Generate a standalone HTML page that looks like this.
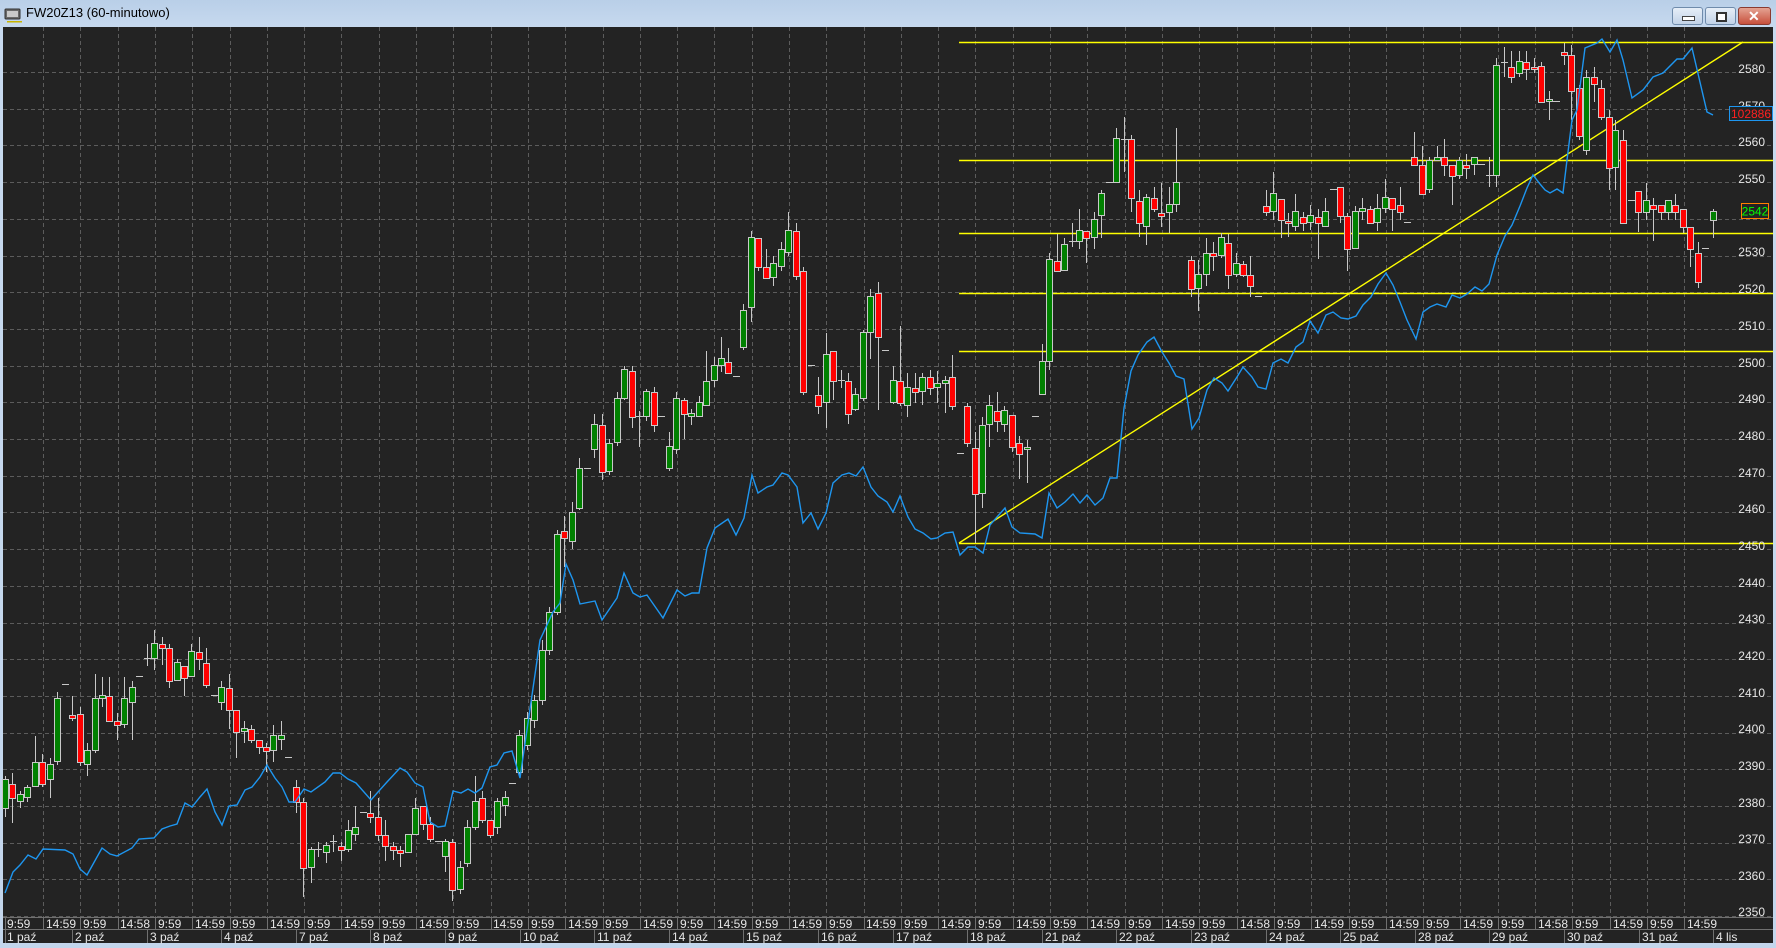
<!DOCTYPE html>
<html><head><meta charset="utf-8">
<style>
html,body{margin:0;padding:0;width:1776px;height:948px;overflow:hidden;background:#c3d6ec;}
#wrap{position:relative;width:1776px;height:948px;background:linear-gradient(#b9cfe8,#c8daef 30px,#c3d6ec);}
svg{position:absolute;left:0;top:0;}
.t{font-family:"Liberation Sans",sans-serif;font-size:12px;fill:#e6e6e6;}
.p{font-family:"Liberation Sans",sans-serif;font-size:12px;fill:#e6e6e6;text-anchor:end;}
.title{position:absolute;left:26px;top:5px;font-family:"Liberation Sans",sans-serif;font-size:13px;color:#000;}
.btn{position:absolute;top:7px;height:16px;border:1px solid #6f8bab;border-radius:3px;background:linear-gradient(#e6eef8,#c2d3e8);}
</style></head>
<body><div id="wrap">
<div class="title">FW20Z13 (60-minutowo)</div>
<div class="btn" style="left:1672px;width:29px;"><div style="position:absolute;left:9px;top:8px;width:11px;height:3px;background:#fff;border:1px solid #444;"></div></div>
<div class="btn" style="left:1705px;width:29px;"><div style="position:absolute;left:10px;top:4px;width:7px;height:6px;border:2px solid #333;background:#fff;"></div></div>
<div class="btn" style="left:1738px;width:31px;background:linear-gradient(#e4a393,#c8503c);border-color:#8a3a30;"><div style="position:absolute;left:9px;top:0px;color:#fff;font:bold 14px 'Liberation Sans',sans-serif;">✕</div></div>
<svg width="1776" height="948" viewBox="0 0 1776 948" xmlns="http://www.w3.org/2000/svg">
<g transform="translate(5,9)">
<rect x="0" y="0" width="15" height="10" rx="1" fill="#6a6a6a" stroke="#333"/>
<rect x="2" y="2" width="11" height="6" fill="#c9c9c9"/>
<rect x="2" y="12" width="15" height="1.5" fill="#c8b400"/>
</g>
<rect x="3" y="27" width="1770" height="916" fill="#232323"/>
<g id="grid" stroke="#5c5c5c" stroke-width="1" stroke-dasharray="4,3" shape-rendering="crispEdges"></g>
<g id="ylw" stroke="#ffff00" stroke-width="1.4" fill="none">
<line x1="959" y1="42.5" x2="1773" y2="42.5"/>
<line x1="959" y1="160.5" x2="1773" y2="160.5"/>
<line x1="959" y1="233.5" x2="1773" y2="233.5"/>
<line x1="959" y1="293.5" x2="1773" y2="293.5"/>
<line x1="959" y1="351.5" x2="1773" y2="351.5"/>
<line x1="959" y1="543.5" x2="1773" y2="543.5"/>
<line x1="959" y1="543" x2="1743" y2="42"/>
</g>
<g id="cand" shape-rendering="crispEdges"></g>
<polyline id="blue" fill="none" stroke="#1e96f0" stroke-width="1.4" points=""/>
<g id="axis" stroke="#707070" shape-rendering="crispEdges">
<line x1="3" y1="917.5" x2="1773" y2="917.5"/>
<line x1="3" y1="929.5" x2="1773" y2="929.5"/>
</g>
<g>
<text class="p" x="1765" y="73">2580</text><text class="p" x="1765" y="110">2570</text><text class="p" x="1765" y="146">2560</text><text class="p" x="1765" y="183">2550</text>
<text class="p" x="1765" y="256">2530</text><text class="p" x="1765" y="293">2520</text><text class="p" x="1765" y="330">2510</text>
<text class="p" x="1765" y="367">2500</text><text class="p" x="1765" y="403">2490</text><text class="p" x="1765" y="440">2480</text><text class="p" x="1765" y="477">2470</text>
<text class="p" x="1765" y="513">2460</text><text class="p" x="1765" y="550">2450</text><text class="p" x="1765" y="587">2440</text><text class="p" x="1765" y="623">2430</text>
<text class="p" x="1765" y="660">2420</text><text class="p" x="1765" y="697">2410</text><text class="p" x="1765" y="733">2400</text><text class="p" x="1765" y="770">2390</text>
<text class="p" x="1765" y="807">2380</text><text class="p" x="1765" y="843">2370</text><text class="p" x="1765" y="880">2360</text><text class="p" x="1765" y="916">2350</text>
</g>
<rect x="1741.5" y="203.5" width="27" height="15" fill="#232323" stroke="#ff8000"/>
<text x="1755" y="215.5" text-anchor="middle" style="font-family:'Liberation Sans',sans-serif;font-size:12px;fill:#00ff00">2542</text>
<rect x="1729.5" y="106.5" width="43" height="14" fill="#232323" stroke="#1e96f0"/>
<text x="1751" y="118" text-anchor="middle" style="font-family:'Liberation Sans',sans-serif;font-size:12px;fill:#ff2020">102886</text>
<g>
<text class="t" x="7" y="928">9:59</text>
<text class="t" x="46" y="928">14:59</text><text class="t" x="83" y="928">9:59</text><text class="t" x="120" y="928">14:58</text><text class="t" x="158" y="928">9:59</text>
<text class="t" x="195" y="928">14:59</text><text class="t" x="232" y="928">9:59</text><text class="t" x="270" y="928">14:59</text><text class="t" x="307" y="928">9:59</text>
<text class="t" x="344" y="928">14:59</text><text class="t" x="382" y="928">9:59</text><text class="t" x="419" y="928">14:59</text><text class="t" x="456" y="928">9:59</text>
<text class="t" x="493" y="928">14:59</text><text class="t" x="531" y="928">9:59</text><text class="t" x="568" y="928">14:59</text><text class="t" x="605" y="928">9:59</text>
<text class="t" x="643" y="928">14:59</text><text class="t" x="680" y="928">9:59</text><text class="t" x="717" y="928">14:59</text><text class="t" x="755" y="928">9:59</text>
<text class="t" x="792" y="928">14:59</text><text class="t" x="829" y="928">9:59</text><text class="t" x="866" y="928">14:59</text><text class="t" x="904" y="928">9:59</text>
<text class="t" x="941" y="928">14:59</text><text class="t" x="978" y="928">9:59</text><text class="t" x="1016" y="928">14:59</text><text class="t" x="1053" y="928">9:59</text>
<text class="t" x="1090" y="928">14:59</text><text class="t" x="1128" y="928">9:59</text><text class="t" x="1165" y="928">14:59</text><text class="t" x="1202" y="928">9:59</text>
<text class="t" x="1240" y="928">14:58</text><text class="t" x="1277" y="928">9:59</text><text class="t" x="1314" y="928">14:59</text><text class="t" x="1351" y="928">9:59</text>
<text class="t" x="1389" y="928">14:59</text><text class="t" x="1426" y="928">9:59</text><text class="t" x="1463" y="928">14:59</text><text class="t" x="1501" y="928">9:59</text>
<text class="t" x="1538" y="928">14:58</text><text class="t" x="1575" y="928">9:59</text><text class="t" x="1613" y="928">14:59</text><text class="t" x="1650" y="928">9:59</text>
<text class="t" x="1687" y="928">14:59</text>
</g>
<g>
<text class="t" x="7" y="941">1 paź</text><text class="t" x="75" y="941">2 paź</text><text class="t" x="150" y="941">3 paź</text><text class="t" x="224" y="941">4 paź</text>
<text class="t" x="299" y="941">7 paź</text><text class="t" x="373" y="941">8 paź</text><text class="t" x="448" y="941">9 paź</text><text class="t" x="523" y="941">10 paź</text>
<text class="t" x="597" y="941">11 paź</text><text class="t" x="672" y="941">14 paź</text><text class="t" x="746" y="941">15 paź</text><text class="t" x="821" y="941">16 paź</text>
<text class="t" x="896" y="941">17 paź</text><text class="t" x="970" y="941">18 paź</text><text class="t" x="1045" y="941">21 paź</text><text class="t" x="1119" y="941">22 paź</text>
<text class="t" x="1194" y="941">23 paź</text><text class="t" x="1269" y="941">24 paź</text><text class="t" x="1343" y="941">25 paź</text><text class="t" x="1418" y="941">28 paź</text>
<text class="t" x="1492" y="941">29 paź</text><text class="t" x="1567" y="941">30 paź</text><text class="t" x="1642" y="941">31 paź</text><text class="t" x="1716" y="941">4 lis</text>
</g>
</svg>
<script>
(function(){
var NS="http://www.w3.org/2000/svg";
function el(p,n,a){var e=document.createElementNS(NS,n);for(var k in a)e.setAttribute(k,a[k]);p.appendChild(e);return e;}
var g=document.getElementById('grid');
for(var p=2350;p<=2580;p+=10){var y=Math.round(72+(2580-p)*3.67)+0.5;el(g,'line',{x1:3,y1:y,x2:1773,y2:y});}
for(var k=0;k<=44;k++){var x=Math.round(43+37.3*k)+0.5;el(g,'line',{x1:x,y1:27,x2:x,y2:917});}
var ax=document.getElementById('axis');
for(var k=0;k<=44;k++){var x=Math.round(43+37.3*k)+0.5;el(ax,'line',{x1:x,y1:917,x2:x,y2:929});}
el(ax,'line',{x1:5.5,y1:917,x2:5.5,y2:943});
for(var i=1;i<=23;i++){var x=Math.round(72+74.6*(i-1))+0.5;el(ax,'line',{x1:x,y1:929,x2:x,y2:943});}
var C=[
[5.3,'g',779,808,776,817],[12.3,'r',784,798,773,823],[19.7,'g',794,801,791,808],[27.3,'g',787,797,785,802],[34.7,'g',762,786,736,787],[42.3,'r',762,784,754,787],[49.7,'g',764,779,758,798],[57.3,'g',698,761,692,765],[64.7,'d',684,684,684,684],[72.3,'r',715,718,696,721],[80,'r',714,762,707,766],[87.3,'g',750,764,743,776],[94.7,'g',698,750,674,753],[102,'g',695,698,677,707],[109.3,'r',696,721,677,721],[116.7,'r',721,725,713,740],[124.3,'g',698,724,677,728],[132,'g',687,702,681,740],[139.3,'d',676,676,676,676],[147,'d',658,658,644,666],[154.3,'g',643,658,630,670],[162,'r',644,648,637,665],[169.3,'r',648,681,644,688],[176.7,'g',662,680,659,681],[184,'r',666,678,666,696],[191.3,'g',651,676,644,676],[199,'r',652,659,637,670],[206.3,'r',663,685,648,688],[213.7,'d',695,695,695,695],[221,'g',687,702,681,710],[228.7,'r',688,710,674,729],[236,'r',710,732,710,758],[243.7,'g',728,731,721,743],[251,'r',729,740,725,743],[258.7,'r',740,747,740,754],[266,'r',747,751,743,772],[273.3,'g',735,750,725,762],[281,'g',735,739,721,750],[288.3,'d',757,757,757,757],[295.7,'r',787,802,780,813],[303,'r',802,868,798,897],[310.7,'g',849,867,847,883],[318,'d',849,849,842,857],[325.7,'g',845,852,842,863],[333,'d',841,841,835,852],[340.7,'r',846,850,842,861],[348,'g',830,849,820,852],[355.3,'g',827,834,806,841],[362.7,'d',812,812,812,812],[370.3,'r',813,817,791,823],[377.7,'r',817,835,798,841],[385.3,'r',835,846,820,861],[392.7,'r',846,850,842,860],[400.3,'r',850,853,846,867],[407.7,'g',834,852,834,852],[415.3,'g',808,834,798,835],[422.7,'r',806,824,806,830],[430.3,'r',824,839,817,842],[437.7,'d',841,841,841,841],[445,'g',841,856,839,872],[452.3,'r',842,890,839,901],[460,'g',867,889,861,894],[467.3,'g',827,863,820,867],[474.7,'g',801,827,776,830],[482.3,'r',798,820,791,823],[489.7,'r',820,835,820,838],[497,'g',801,827,798,834],[504.7,'g',797,805,791,816],[512,'d',783,783,783,783],[519.3,'g',735,772,730,775],
[526.7,'g',718,745,712,750],[534,'g',700,720,695,728],[541.7,'g',650,700,640,705],[549.3,'g',612,650,607,655],[556.7,'g',534,612,530,615],
[564.3,'r',531,538,516,567],[571.7,'g',512,541,502,549],[579.3,'g',468,508,458,510],[586.7,'d',468,468,468,468],[594.3,'g',424,449,414,458],[601.7,'r',425,472,414,480],[609.3,'g',443,471,439,475],[616.7,'g',398,442,392,446],[624,'g',369,398,366,400],[631.7,'r',371,417,366,428],[639,'d',416,416,411,447],[646.3,'g',391,416,389,421],[653.7,'r',392,425,387,432],[661.3,'d',416,416,416,416],[668.7,'g',446,468,432,471],[676.3,'g',398,449,392,454],[683.7,'r',400,414,398,439],[691.3,'g',413,416,409,425],[698.7,'g',402,416,396,416],[706.3,'g',381,405,351,405],[713.7,'g',365,380,357,387],[721,'g',358,365,337,372],[728.3,'r',362,373,348,373],[736,'d',376,376,376,376],[743.3,'g',310,347,304,350],[751,'g',237,307,231,322],[758.3,'r',238,267,238,271],[765.7,'r',267,278,249,278],[773.3,'g',263,277,256,286],[780.7,'g',249,266,242,271],[788.3,'g',230,252,212,256],[795.7,'r',231,276,223,280],[803,'r',271,392,267,395],[810.7,'d',365,365,365,365],[818,'r',395,406,377,414],[825.7,'g',354,402,333,428],[833,'r',351,381,351,400],[840.7,'d',380,380,370,388],[848,'r',381,414,373,424],[855.3,'g',394,409,388,411],[863,'g',332,398,330,401],[870.3,'g',296,332,289,359],[878,'r',293,337,282,410],[885.3,'d',350,350,350,350],[892.7,'g',380,402,366,404],[900,'r',381,403,326,406],[907.3,'g',387,405,373,417],[915,'r',388,392,373,403],[922.3,'g',377,391,373,405],[930,'r',377,388,370,395],[937.3,'g',383,387,371,403],[944.7,'g',380,383,376,413],[952.3,'r',377,406,355,410],[959.7,'d',453,453,453,453],[967.3,'r',406,443,403,447],[974.7,'r',448,494,432,543],[982,'g',425,493,417,508],[989.3,'g',405,424,395,447],[996.7,'r',411,421,392,432],[1004.3,'g',410,424,406,432],[1011.7,'r',415,447,415,452],[1019,'r',443,454,436,479],
[1027.3,'g',447,449,440,483],[1034.7,'d',416,416,416,416],[1042,'g',361,394,344,394],[1049.3,'g',259,361,253,370],[1056.7,'r',261,271,234,271],[1064,'g',244,270,238,270],[1071.7,'d',241,241,223,247],[1079,'g',230,241,209,249],[1086.3,'r',231,238,231,263],[1094,'g',219,237,212,249],[1101.3,'g',193,215,190,238],[1108.7,'d',182,182,182,182],[1116.3,'g',138,182,128,182],[1123.7,'d',139,139,117,172],[1131.3,'r',139,198,135,212],[1138.7,'r',201,223,190,237],[1146.3,'g',197,226,194,245],[1153.7,'r',198,209,187,212],[1161,'r',213,216,183,227],[1168.7,'g',204,212,187,233],[1176,'g',182,204,128,212],[1191,'r',260,289,256,297],[1198.3,'g',274,288,260,311],[1206,'g',253,274,238,286],[1213.3,'r',253,256,242,271],[1220.7,'g',237,255,233,258],[1228.3,'r',243,275,234,289],[1235.7,'g',263,274,253,277],[1243,'r',264,275,261,277],[1250.3,'r',275,286,256,297],[1257.7,'d',296,296,296,296],[1265.7,'r',206,212,190,216],[1273.3,'g',193,211,172,220],[1280.7,'r',199,220,199,238],[1288,'r',221,223,213,237],[1295.3,'g',211,226,194,231],[1303,'r',217,223,212,231],[1310.3,'g',215,222,205,230],[1318,'r',217,223,209,259],[1325.3,'g',211,226,198,226],[1332.7,'d',189,189,189,189],[1340,'r',187,216,187,223],[1347.3,'r',216,249,213,271],[1355,'g',211,248,206,248],[1362.3,'g',208,211,198,220],[1369.7,'r',209,223,206,223],[1377.3,'g',208,222,194,231],[1384.7,'g',197,208,179,213],[1392.3,'r',198,209,198,231],[1399.7,'r',205,212,187,220],[1407,'d',222,222,222,222],[1414.3,'r',157,165,132,165],[1421.7,'r',165,194,146,194],[1429.3,'g',160,189,157,193],[1436.7,'g',157,160,146,160],[1444.3,'r',157,165,139,176],[1451.7,'r',165,176,165,205],[1459,'g',160,175,157,179],[1466.3,'r',165,168,154,179],[1473.7,'g',157,164,157,175],[1481.3,'d',164,164,164,164],[1489,'d',175,175,157,187],[1496.3,'g',65,175,58,187],
[1504,'d',62,62,47,77],[1511.3,'r',67,77,51,83],[1519,'g',61,73,51,77],[1526.3,'r',62,69,51,80],[1534,'r',67,69,58,73],[1541.3,'r',66,102,62,102],[1548.7,'g',99,101,91,120],[1556,'d',101,101,101,101],[1563.7,'r',52,55,43,65],[1571,'r',55,91,45,120],[1578.7,'r',88,136,85,140],[1586.3,'g',77,150,70,155],[1593.7,'r',77,84,67,102],[1601,'r',88,117,80,120],[1608.7,'r',117,168,110,190],[1615.3,'g',130,167,120,190],[1623,'r',140,223,130,223],[1631,'d',200,200,200,200],[1638.3,'r',191,212,191,232],[1645.7,'g',200,212,183,220],[1653.3,'r',205,209,198,241],[1660.7,'r',205,212,205,220],[1668,'g',200,212,200,220],[1675.3,'r',205,212,194,220],[1683,'r',209,227,209,233],[1690.3,'r',227,249,227,267],[1697.7,'r',253,282,242,288],[1705,'d',248,248,248,248],[1712.7,'g',211,220,209,238]
];
var cg=document.getElementById('cand');
C.forEach(function(c){
 var x=Math.round(c[0]);
 if(c[5]>c[4]) el(cg,'line',{x1:x+0.5,y1:c[4],x2:x+0.5,y2:c[5],stroke:'#c8c8c8','stroke-width':1});
 if(c[1]=='d'){el(cg,'line',{x1:x-3,y1:c[2]+0.5,x2:x+4,y2:c[2]+0.5,stroke:'#c8c8c8','stroke-width':1});}
 else{var h=Math.max(c[3]-c[2],2);el(cg,'rect',{x:x-2.5,y:c[2]+0.5,width:6,height:h,fill:c[1]=='g'?'#008000':'#ff0000',stroke:'#c8c8c8','stroke-width':1});}
});
var B=[[5,893],[13,872],[20,865],[28,855],[36,859],[43,849],[65,850],[73,854],[80,869],[87,875],[102,848],[110,854],[117,856],[132,848],[139,839],[154,838],[162,829],[170,826],[177,824],[185,803],[192,807],[200,797],[207,789],[215,812],[222,825],[229,806],[237,805],[245,790],[252,787],[260,777],[267,765],[275,778],[282,787],[289,802],[295,802],[304,789],[311,792],[325,782],[333,773],[340,773],[348,779],[356,783],[371,800],[378,792],[387,782],[400,768],[407,772],[415,783],[423,787],[430,822],[438,827],[445,826],[453,791],[461,793],[468,789],[475,793],[482,788],[490,767],[497,765],[504,753],[512,751],[520,778],[540,640],[553,612],[560,603],[566,564],[573,580],[580,604],[595,601],[602,620],[617,598],[624,573],[633,593],[640,597],[647,595],[663,618],[677,590],[685,596],[692,593],[699,593],[707,548],[715,528],[728,519],[736,535],[744,518],[752,475],[758,493],[767,487],[773,485],[782,473],[788,475],[797,487],[803,523],[811,513],[818,529],[826,513],[833,483],[842,475],[849,473],[856,476],[863,467],[871,487],[878,496],[887,502],[893,512],[900,496],[908,517],[915,529],[923,533],[931,539],[937,538],[945,533],[953,532],[960,555],[968,547],[975,547],[983,553],[990,525],[997,517],[1005,508],[1012,527],[1020,533],[1035,534],[1042,538],[1049,493],[1057,508],[1065,502],[1073,494],[1080,503],[1087,495],[1095,505],[1103,498],[1110,478],[1117,478],[1124,408],[1131,371],[1138,355],[1147,342],[1154,337],[1162,352],[1169,363],[1176,376],[1184,379],[1192,429],[1199,418],[1207,390],[1214,378],[1222,383],[1228,391],[1237,377],[1243,367],[1252,377],[1258,387],[1266,389],[1273,363],[1281,359],[1288,363],[1296,347],[1303,342],[1310,321],[1318,333],[1326,315],[1333,312],[1341,318],[1348,319],[1356,316],[1363,305],[1371,297],[1378,284],[1386,273],[1393,285],[1400,302],[1407,320],[1416,339],[1423,312],[1430,307],[1437,304],[1446,307],[1452,295],[1460,298],[1467,294],[1475,287],[1482,291],[1489,284],[1497,255],[1505,236],[1512,225],[1520,206],[1527,188],[1533,175],[1540,184],[1545,190],[1550,193],[1557,189],[1563,193],[1567,160],[1572,120],[1577,110],[1585,48],[1597,43],[1602,39],[1610,52],[1617,40],[1623,60],[1632,98],[1643,90],[1653,77],[1663,73],[1677,59],[1683,59],[1692,48],[1707,112],[1713,115]];
document.getElementById('blue').setAttribute('points',B.map(function(p){return p[0]+','+p[1];}).join(' '));
})();
</script>
</div></body></html>
